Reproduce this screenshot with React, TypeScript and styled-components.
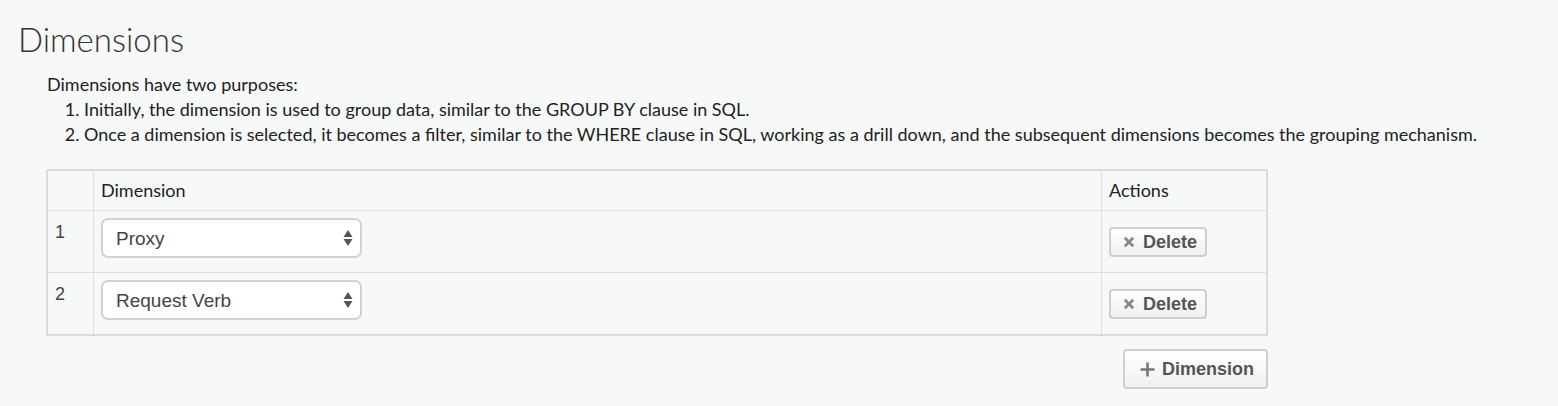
import React from "react";
import styled, { createGlobalStyle } from "styled-components";

const Global = createGlobalStyle`
  html, body { margin: 0; padding: 0; background: #f7f8f8; }
  body { font-family: Lato, "Open Sans", sans-serif; color: #222; }
`;

const Page = styled.div`
  padding: 19px 18px 0 18px;
`;

const Title = styled.h2`
  margin: 0;
  font-family: Lato, sans-serif;
  font-weight: 300;
  font-size: 33px;
  line-height: 40px;
  color: #333;
`;

const Body = styled.div`
  padding: 13px 0 0 29px;
  font-size: 18px;
  line-height: 25px;
  color: #222;
`;

const List = styled.ol`
  margin: 0;
  padding-left: 37px;
`;

const Table = styled.table`
  margin: 22px 0 0 -1px;
  border-collapse: collapse;
  width: 1222px;
  border: 2px solid #dcdcdc;
`;

const Th = styled.th<{ $w?: number }>`
  border: 1px solid #e0e0e0;
  text-align: left;
  font-weight: 400;
  font-size: 18px;
  line-height: 22px;
  padding: 8px 7px 9px 7px;
  width: ${(p) => (p.$w ? `${p.$w}px` : "auto")};
  color: #222;
`;

const Td = styled.td`
  border: 1px solid #e0e0e0;
  vertical-align: top;
  padding: 7px 7px 14px 7px;
  color: #444;
`;

const Num = styled.div`
  padding-top: 3px;
  font-family: "Liberation Sans", Arial, sans-serif;
  font-size: 18px;
  line-height: 22px;
  color: #444;
`;

const Select = styled.div`
  box-sizing: border-box;
  width: 261px;
  height: 40px;
  border: 2px solid #d2d2d2;
  border-radius: 7px;
  background: #fff;
  display: flex;
  align-items: center;
  justify-content: space-between;
  padding: 0 7px 0 13px;
  font-family: "Liberation Sans", Arial, sans-serif;
  font-size: 19px;
  color: #444;
`;

const Arrows = styled.svg`
  width: 10px;
  height: 18px;
`;

const ActionCell = styled(Td)`
  padding-top: 16px;
`;

const Button = styled.button<{ $big?: boolean }>`
  box-sizing: border-box;
  display: inline-flex;
  align-items: center;
  gap: ${(p) => (p.$big ? 7 : 8)}px;
  height: ${(p) => (p.$big ? 40 : 30)}px;
  padding: ${(p) => (p.$big ? "0 12px 0 15px" : "0 8px 0 12px")};
  border: 2px solid #cfcfcf;
  border-radius: 4px;
  background: linear-gradient(#ffffff, #f0f0f0);
  font-family: "Liberation Sans", Arial, sans-serif;
  font-weight: 700;
  font-size: 18px;
  color: #555;
  cursor: pointer;
`;

const Footer = styled.div`
  width: 1221px;
  display: flex;
  justify-content: flex-end;
  padding-top: 13px;
`;

const XIcon = () => (
  <svg width="12" height="12" viewBox="0 0 10 10">
    <path d="M1.5 1.5 L8.5 8.5 M8.5 1.5 L1.5 8.5" stroke="#888" strokeWidth="2.3" strokeLinecap="butt" />
  </svg>
);

const PlusIcon = () => (
  <svg width="15" height="15" viewBox="0 0 14 14">
    <path d="M7 0.5 V13.5 M0.5 7 H13.5" stroke="#777" strokeWidth="2.4" />
  </svg>
);

const rows = ["Proxy", "Request Verb"];

export default function App() {
  return (
    <>
      <Global />
      <Page>
        <Title>Dimensions</Title>
        <Body>
          Dimensions have two purposes:
          <List>
            <li>Initially, the dimension is used to group data, similar to the GROUP BY clause in SQL.</li>
            <li>
              Once a dimension is selected, it becomes a filter, similar to the WHERE clause in SQL, working as a drill
              down, and the subsequent dimensions becomes the grouping mechanism.
            </li>
          </List>
          <Table>
            <thead>
              <tr>
                <Th $w={31}></Th>
                <Th>Dimension</Th>
                <Th $w={150}>Actions</Th>
              </tr>
            </thead>
            <tbody>
              {rows.map((r, i) => (
                <tr key={r}>
                  <Td>
                    <Num>{i + 1}</Num>
                  </Td>
                  <Td>
                    <Select>
                      <span>{r}</span>
                      <Arrows viewBox="0 0 10 18">
                        <path d="M5 1 L9.5 8 H0.5 Z" fill="#555" />
                        <path d="M0.5 10 H9.5 L5 17 Z" fill="#555" />
                      </Arrows>
                    </Select>
                  </Td>
                  <ActionCell>
                    <Button>
                      <XIcon />
                      Delete
                    </Button>
                  </ActionCell>
                </tr>
              ))}
            </tbody>
          </Table>
          <Footer>
            <Button $big>
              <PlusIcon />
              Dimension
            </Button>
          </Footer>
        </Body>
      </Page>
    </>
  );
}
